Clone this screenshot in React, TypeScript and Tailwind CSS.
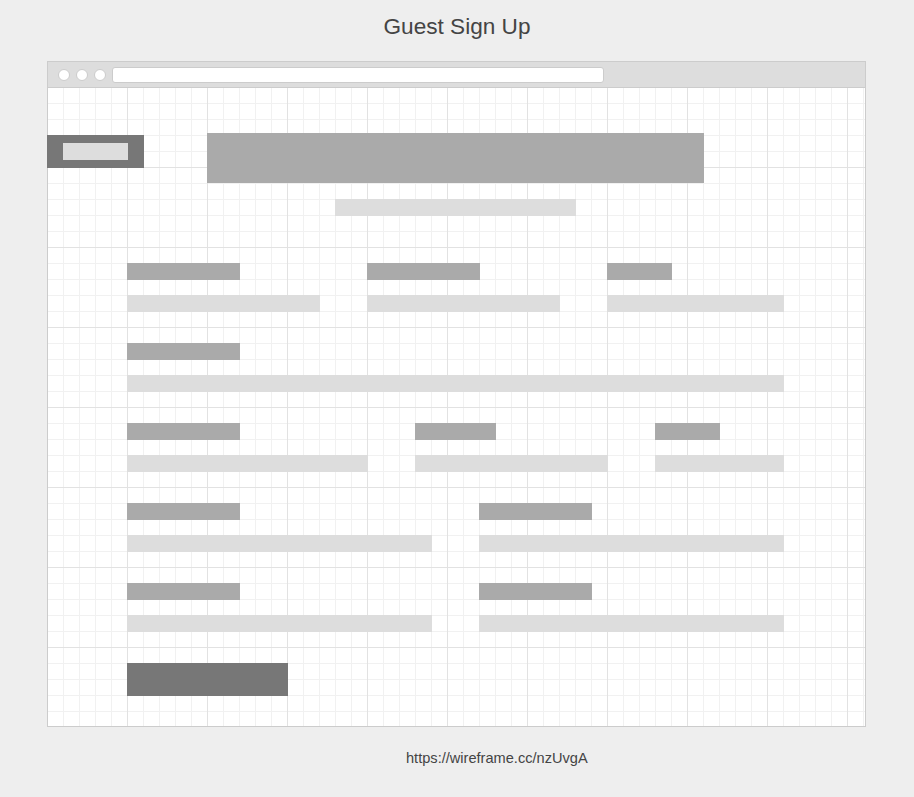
import React from 'react';

const Label: React.FC<{ w: string }> = ({ w }) => <div className={`h-[17px] bg-[#aaaaaa] ${w}`} />;
const Input: React.FC<{ w: string }> = ({ w }) => <div className={`mt-[15px] h-[17px] bg-[#dddddd] ${w}`} />;

const Field: React.FC<{ col: string; label: string; input: string }> = ({ col, label, input }) => (
    <div className={col}>
        <Label w={label} />
        <Input w={input} />
    </div>
);

const App: React.FC = () => {
    return (
        <div className="min-h-screen w-[914px] bg-[#eeeeee] font-['Liberation_Sans',Arial,sans-serif]">
            {/* Title */}
            <div className="h-[61px] pt-[13px]">
                <h1 className="text-center text-[22.6px] leading-[28px] text-[#444444]">Guest Sign Up</h1>
            </div>

            {/* Browser frame */}
            <div className="ml-[47px] w-[819px] border border-[#cccccc] bg-white">
                <div className="flex h-[26px] items-center border-b border-[#cccccc] bg-[#dddddd] pl-[10px]">
                    <div className="flex gap-[6px]">
                        <span className="h-[12px] w-[12px] rounded-full border border-[#cccccc] bg-white" />
                        <span className="h-[12px] w-[12px] rounded-full border border-[#cccccc] bg-white" />
                        <span className="h-[12px] w-[12px] rounded-full border border-[#cccccc] bg-white" />
                    </div>
                    <div className="ml-[6px] h-[16px] w-[492px] rounded-[3px] border border-[#cccccc] bg-white" />
                </div>

                <div className="h-[638px] bg-[image:linear-gradient(to_right,#e2e2e2_1px,transparent_1px),linear-gradient(to_bottom,#e2e2e2_1px,transparent_1px),linear-gradient(to_right,#f1f1f1_1px,transparent_1px),linear-gradient(to_bottom,#f1f1f1_1px,transparent_1px)] bg-[size:80px_80px,80px_80px,16px_16px,16px_16px] bg-[position:-1px_-1px] pt-[45px]">
                    {/* Header row */}
                    <div className="flex items-start">
                        <div className="-ml-px mt-[2px] h-[33px] w-[97px] bg-[#777777] pl-[16px] pt-[8px]">
                            <div className="h-[17px] w-[65px] bg-[#dddddd]" />
                        </div>
                        <div className="ml-[63px] h-[50px] w-[497px] bg-[#aaaaaa]" />
                    </div>
                    <div className="ml-[287px] mt-[16px] h-[17px] w-[241px] bg-[#dddddd]" />

                    {/* Form */}
                    <div className="pl-[79px] pt-[47px]">
                        <div className="flex">
                            <Field col="w-[240px]" label="w-[113px]" input="w-[193px]" />
                            <Field col="w-[240px]" label="w-[113px]" input="w-[193px]" />
                            <Field col="flex-1" label="w-[65px]" input="w-[177px]" />
                        </div>
                        <div className="mt-[31px]">
                            <Field col="" label="w-[113px]" input="w-[657px]" />
                        </div>
                        <div className="mt-[31px] flex">
                            <Field col="w-[288px]" label="w-[113px]" input="w-[241px]" />
                            <Field col="w-[240px]" label="w-[81px]" input="w-[193px]" />
                            <Field col="flex-1" label="w-[65px]" input="w-[129px]" />
                        </div>
                        <div className="mt-[31px] flex">
                            <Field col="w-[352px]" label="w-[113px]" input="w-[305px]" />
                            <Field col="flex-1" label="w-[113px]" input="w-[305px]" />
                        </div>
                        <div className="mt-[31px] flex">
                            <Field col="w-[352px]" label="w-[113px]" input="w-[305px]" />
                            <Field col="flex-1" label="w-[113px]" input="w-[305px]" />
                        </div>
                        <div className="mt-[31px] h-[33px] w-[161px] bg-[#777777]" />
                    </div>
                </div>
            </div>

            {/* Footer link */}
            <div className="pl-[406px] pt-[19px]">
                <span className="text-[14.6px] leading-[20px] text-[#444444]">https://wireframe.cc/nzUvgA</span>
            </div>
        </div>
    );
};

export default App;
